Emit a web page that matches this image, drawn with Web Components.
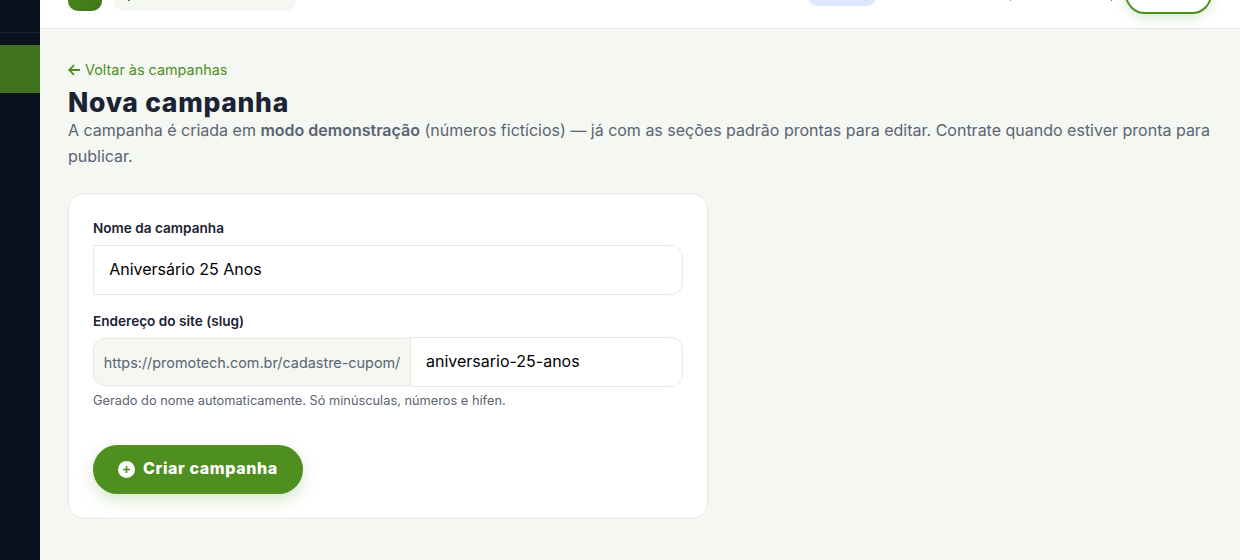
<!DOCTYPE html>
<html lang="pt-BR">
<head>
<meta charset="utf-8">
<title>Nova campanha</title>
<style>
  html, body { margin: 0; height: 100%; }
  body { font-family: Inter, "Liberation Sans", sans-serif; overflow: hidden; }
</style>

<template id="app-shell-tpl">
  <style>
    :host { display: grid; grid-template-columns: 40px 1fr; height: 560px; background: #f5f7f2; }
    .main { display: flex; flex-direction: column; min-width: 0; }
  </style>
  <app-sidebar></app-sidebar>
  <div class="main">
    <app-topbar></app-topbar>
    <slot></slot>
  </div>
</template>

<template id="app-sidebar-tpl">
  <style>
    :host { display: block; background: #0a1220; }
    .line { height: 1px; background: #1c2431; margin-top: 32px; }
    .active { height: 48px; margin-top: 12px; background: #41721f; }
  </style>
  <div class="line"></div>
  <div class="active"></div>
</template>

<template id="app-topbar-tpl">
  <style>
    :host { display: flex; height: 28px; background: #fff; border-bottom: 1px solid #e4e6e1; align-items: flex-end; padding: 0 28px; position: relative; z-index: 1; }
    .logo { width: 34px; height: 34px; border-radius: 10px; background: linear-gradient(135deg, #4f8f20, #3f7419); margin-bottom: 17px; flex: none; }
    .search { width: 182px; height: 34px; border-radius: 10px; background: #f5f7f2; margin: 0 0 17px 12px; flex: none; position: relative; }
    .search i { position: absolute; left: 14px; bottom: 10px; width: 2px; height: 3px; background: #4f8f20; }
    .right { margin-left: auto; display: flex; align-items: flex-end; }
    .pill { width: 69px; height: 30px; border-radius: 10px; background: #dbe8fe; margin-bottom: 22px; }
    .speck { width: 1px; height: 3px; margin-bottom: 27px; }
    .s1 { background: #e29a1b; margin-left: 133px; }
    .s2 { background: #2f7fe0; margin-left: 100px; }
    .outline { box-sizing: border-box; width: 87px; height: 40px; border: 2px solid #4f8f1f; border-radius: 20px; background: #fff; margin: 0 0 14px 13px; box-shadow: 0 4px 12px rgba(79,143,31,.2); }
  </style>
  <div class="logo"></div>
  <div class="search"><i></i></div>
  <div class="right">
    <div class="pill"></div>
    <div class="speck s1"></div>
    <div class="speck s2"></div>
    <div class="outline"></div>
  </div>
</template>

<template id="page-header-tpl">
  <style>
    :host { display: block; padding: 32px 28px 0; color: #5a6472; }
    a { display: flex; align-items: center; gap: 5px; font-size: 14.4px; line-height: 18px; color: #4f8f1f; text-decoration: none; }
    h1 { margin: 8px 0 0; font: 800 26.5px/30px Inter, sans-serif; letter-spacing: .7px; color: #1a2233; }
    p { margin: 0; font-size: 16px; line-height: 26px; }
    ::slotted(b) { font-weight: 600; }
  </style>
  <a href="#"><svg width="12" height="12" viewBox="0 0 12 12" fill="none" stroke="currentColor" stroke-width="1.8"><path d="M12 6H1.2M6 1.2 1.2 6 6 10.8"/></svg>Voltar às campanhas</a>
  <h1></h1>
  <p><slot></slot></p>
</template>

<template id="form-card-tpl">
  <style>
    :host { display: block; box-sizing: border-box; width: 640px; margin: 24px 0 0 28px; padding: 24px; background: #fff; border: 1px solid #e7e9e4; border-radius: 16px; }
  </style>
  <slot></slot>
</template>

<template id="form-field-tpl">
  <style>
    :host { display: block; margin-bottom: 16px; }
    label { display: block; font-size: 13.6px; font-weight: 600; line-height: 21px; color: #1a2233; margin-bottom: 5.6px; }
    .hint { font-size: 12.8px; line-height: 16px; color: #5a6472; margin-top: 5.6px; }
  </style>
  <label></label>
  <slot></slot>
  <div class="hint" hidden></div>
</template>

<template id="text-box-tpl">
  <style>
    :host { display: block; }
    .wrap { display: flex; height: 50px; box-sizing: border-box; }
    .prefix { display: flex; align-items: center; box-sizing: border-box; padding: 0 9.5px 0 9.8px; height: 48px; margin-top: 1px; font-size: 14.4px; color: #5a6472; background: #f5f7f2; border: 1px solid #e7e9e4; border-right: 0; border-radius: 12px 0 0 12px; white-space: nowrap; }
    input { flex: 1; min-width: 0; box-sizing: border-box; height: 50px; padding: 0 14px 2px; font: 16px Inter, sans-serif; color: #000; background: #fff; border: 1px solid #e7e9e4; border-radius: 12px; outline: 0; }
    .prefix + input { border-radius: 0 12px 12px 0; padding-left: 15.2px; }
    .prefix[hidden] { display: none; }
  </style>
  <div class="wrap">
    <span class="prefix" hidden></span>
    <input type="text">
  </div>
</template>

<template id="primary-button-tpl">
  <style>
    :host { display: inline-block; margin-top: 20.2px; }
    button { display: flex; align-items: center; gap: 8px; box-sizing: border-box; height: 49px; padding: 0 25px 2px; border: 0; border-radius: 25px; background: #4f8f1f; color: #fff; font: 800 16px Inter, sans-serif; letter-spacing: .6px; box-shadow: 0 6px 16px rgba(79,143,31,.22); }
    svg { margin-top: 2px; }
  </style>
  <button type="button">
    <svg width="17" height="17" viewBox="0 0 17 17"><circle cx="8.5" cy="8.5" r="8.5" fill="#fff"/><path d="M8.5 5v7M5 8.5h7" stroke="#4f8f1f" stroke-width="1.6"/></svg>
    <slot></slot>
  </button>
</template>
</head>
<body>
<app-shell>
  <page-header title-text="Nova campanha">A campanha é criada em <b>modo demonstração</b> <span>(números fictícios) — já com as seções padrão prontas para editar. Contrate quando estiver pronta para</span> <span>publicar.</span></page-header>
  <form-card>
    <form-field label="Nome da campanha"><text-box value="Aniversário 25 Anos"></text-box></form-field>
    <form-field label="Endereço do site (slug)" hint="Gerado do nome automaticamente. Só minúsculas, números e hífen."><text-box prefix="https://promotech.com.br/cadastre-cupom/" value="aniversario-25-anos"></text-box></form-field>
    <primary-button>Criar campanha</primary-button>
  </form-card>
</app-shell>

<script>
  function base(id) {
    return class extends HTMLElement {
      constructor() {
        super();
        this.attachShadow({mode: 'open'}).appendChild(document.getElementById(id).content.cloneNode(true));
      }
    };
  }

  class PageHeader extends base('page-header-tpl') {
    connectedCallback() {
      this.shadowRoot.querySelector('h1').textContent = this.getAttribute('title-text');
    }
  }

  class FormField extends base('form-field-tpl') {
    connectedCallback() {
      this.shadowRoot.querySelector('label').textContent = this.getAttribute('label');
      const hint = this.getAttribute('hint');
      if (hint) {
        const el = this.shadowRoot.querySelector('.hint');
        el.textContent = hint;
        el.hidden = false;
      }
    }
  }

  class TextBox extends base('text-box-tpl') {
    connectedCallback() {
      const input = this.shadowRoot.querySelector('input');
      input.setAttribute('value', this.getAttribute('value') || '');
      const prefix = this.getAttribute('prefix');
      if (prefix) {
        const el = this.shadowRoot.querySelector('.prefix');
        el.textContent = prefix;
        el.hidden = false;
      }
    }
  }

  customElements.define('app-shell', base('app-shell-tpl'));
  customElements.define('app-sidebar', base('app-sidebar-tpl'));
  customElements.define('app-topbar', base('app-topbar-tpl'));
  customElements.define('page-header', PageHeader);
  customElements.define('form-card', base('form-card-tpl'));
  customElements.define('form-field', FormField);
  customElements.define('text-box', TextBox);
  customElements.define('primary-button', base('primary-button-tpl'));
</script>
</body>
</html>
